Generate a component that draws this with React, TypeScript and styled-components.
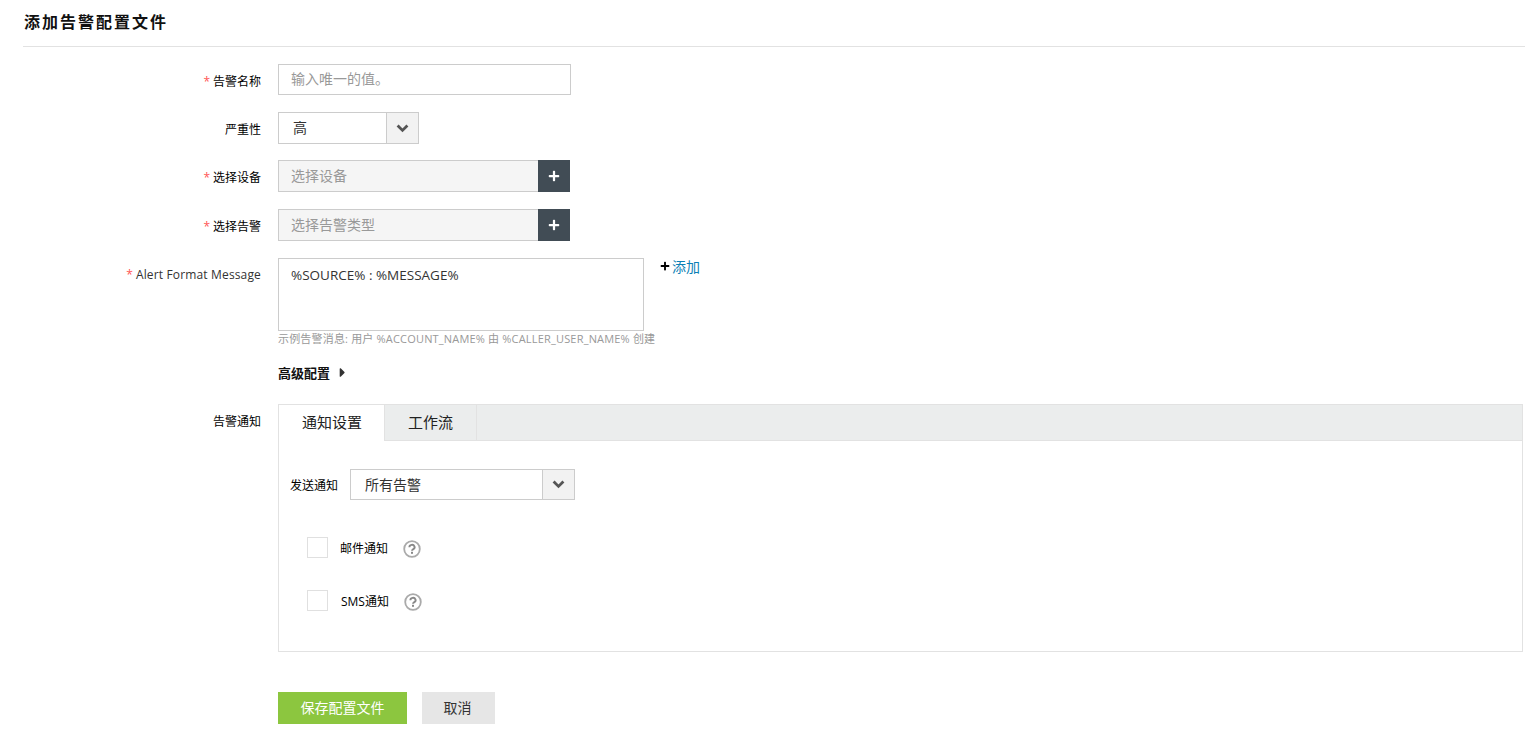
import styled, { createGlobalStyle } from 'styled-components'
import { FaPlus, FaCaretRight } from 'react-icons/fa'

const GlobalStyle = createGlobalStyle`
  html, body {
    margin: 0;
    padding: 0;
    background: #fff;
    font-family: "Open Sans", "Noto Sans CJK SC", sans-serif;
    color: #000;
  }
`

const Page = styled.div`
  width: 1525px;
  height: 742px;
  overflow: hidden;
  box-sizing: border-box;
`

const Title = styled.h1`
  margin: 0 0 0 23px;
  box-sizing: border-box;
  padding: 9px 0 0 1px;
  border-bottom: 1px solid #e2e2e2;
  height: 47px;
  font-size: 16px;
  letter-spacing: 2px;
  line-height: 24px;
  font-weight: 700;
  color: #111;
  font-family: "Noto Sans CJK SC", sans-serif;
`

const Form = styled.div`
  display: flex;
  flex-direction: column;
  padding: 17px 2px 0 23px;
`

const Row = styled.div<{ $gap: number }>`
  display: grid;
  grid-template-columns: 238px 1fr;
  column-gap: 17px;
  margin-bottom: ${(p) => p.$gap}px;
  align-items: start;
`

const Label = styled.label<{ $top?: number }>`
  text-align: right;
  font-size: 12px;
  line-height: 18px;
  padding-top: ${(p) => p.$top ?? 9}px;
  color: #000;
`

const Star = styled.span`
  color: #f55;
  margin-right: 3px;
`

const EnLabel = styled.span`
  color: #333;
  letter-spacing: 0.15px;
`

const TextInput = styled.div`
  width: 293px;
  height: 31px;
  box-sizing: border-box;
  border: 1px solid #ccc;
  padding: 0 12px;
  font-size: 14px;
  line-height: 27px;
  color: #999;
`

const SelectBox = styled.div<{ $width: number; $height: number }>`
  display: flex;
  width: ${(p) => p.$width}px;
  height: ${(p) => p.$height}px;
  box-sizing: border-box;
  border: 1px solid #ccc;
`

const SelectValue = styled.div`
  flex: 1;
  padding-left: 14px;
  font-size: 14px;
  line-height: 30px;
  color: #333;
`

const SelectArrow = styled.div`
  width: 31px;
  display: flex;
  align-items: center;
  justify-content: center;
  background: #f2f2f2;
  border-left: 1px solid #ccc;
`

const Picker = styled.div`
  display: flex;
  width: 292px;
  height: 32px;
`

const PickerField = styled.div`
  flex: 1;
  box-sizing: border-box;
  background: #f5f5f5;
  border: 1px solid #ccc;
  border-right: none;
  padding-left: 12px;
  font-size: 14px;
  line-height: 29px;
  color: #999;
`

const PickerButton = styled.div`
  width: 32px;
  display: flex;
  align-items: center;
  justify-content: center;
  background: #414c55;
  color: #fff;
  font-size: 12px;
`

const MessageWrap = styled.div`
  display: flex;
  align-items: flex-start;
`

const MessageBox = styled.div`
  width: 366px;
  height: 73px;
  box-sizing: border-box;
  border: 1px solid #ccc;
  padding: 7px 12px;
  font-size: 13.5px;
  line-height: 18px;
  color: #333;
`

const AddLink = styled.div`
  display: flex;
  align-items: center;
  margin-left: 16px;
  height: 16px;
  font-size: 14px;
  color: #0b7fb5;
`

const AddIcon = styled.span`
  display: flex;
  color: #000;
  font-size: 10px;
  margin-right: 2px;
`

const Hint = styled.div`
  font-size: 11px;
  line-height: 16px;
  letter-spacing: 0.18px;
  color: #999;
`

const Advanced = styled.div`
  display: flex;
  align-items: center;
  margin-top: 15px;
  height: 20px;
  font-size: 13px;
  font-weight: 700;
  color: #111;
`

const Caret = styled.span`
  display: flex;
  margin-left: 5px;
  font-size: 15px;
  color: #333;
`

const TabPanel = styled.div`
  height: 248px;
  box-sizing: border-box;
  border: 1px solid #e2e2e2;
`

const TabBar = styled.div`
  display: flex;
  height: 35px;
  background: #ebeded;
  border-bottom: 1px solid #e2e2e2;
`

const Tab = styled.div<{ $active?: boolean }>`
  width: ${(p) => (p.$active ? 106 : 92)}px;
  height: ${(p) => (p.$active ? 36 : 35)}px;
  box-sizing: border-box;
  padding-left: ${(p) => (p.$active ? 1 : 0)}px;
  text-align: center;
  font-size: 15px;
  line-height: 35px;
  color: #222;
  background: ${(p) => (p.$active ? '#fff' : 'transparent')};
  border-right: 1px solid #e2e2e2;
`

const TabBody = styled.div`
  padding: 28px 0 0 11px;
`

const NotifyRow = styled.div`
  display: flex;
  align-items: center;
  margin-bottom: 37px;
`

const NotifyLabel = styled.span`
  width: 60px;
  font-size: 12px;
  line-height: 18px;
  padding-top: 2px;
  color: #000;
`

const CheckRow = styled.div<{ $gap: number }>`
  display: flex;
  align-items: center;
  height: 21px;
  padding-left: 17px;
  margin-bottom: ${(p) => p.$gap}px;
`

const CheckBox = styled.span`
  width: 21px;
  height: 21px;
  box-sizing: border-box;
  border: 1px solid #e0e0e0;
  margin-right: 12px;
`

const CheckLabel = styled.span<{ $indent?: number }>`
  font-size: 12px;
  line-height: 18px;
  padding-top: 2px;
  margin-left: ${(p) => p.$indent ?? 0}px;
  color: #000;
`

const HelpIcon = styled.svg`
  margin: 2px 0 0 15px;
  flex: none;
`

const Actions = styled.div`
  display: flex;
  gap: 15px;
  margin: 40px 0 0 255px;
`

const SaveButton = styled.button`
  width: 129px;
  height: 32px;
  border: none;
  padding: 0 0 3px;
  background: #8cc63f;
  color: #fff;
  font-family: inherit;
  font-size: 14px;
`

const CancelButton = styled.button`
  width: 73px;
  height: 32px;
  border: none;
  padding: 0 2px 3px 0;
  background: #e6e6e6;
  color: #333;
  font-family: inherit;
  font-size: 14px;
`

function Help() {
  return (
    <HelpIcon width="18" height="18" viewBox="0 0 18 18">
      <circle cx="9" cy="9" r="7.8" fill="none" stroke="#aaa" strokeWidth="1.8" />
      <path d="M6.4 7.2a2.6 2.3 0 1 1 3.9 1.9c-.9.5-1.3.9-1.3 1.7" fill="none" stroke="#888" strokeWidth="1.9" />
      <rect x="8" y="11.8" width="2" height="2" fill="#888" />
    </HelpIcon>
  )
}

function Chevron() {
  return (
    <svg width="13" height="9" viewBox="0 0 13 9">
      <path d="M1.6 1.6 6.5 6.4 11.4 1.6" fill="none" stroke="#555" strokeWidth="2.8" />
    </svg>
  )
}

export default function App() {
  return (
    <Page>
      <GlobalStyle />
      <Title>添加告警配置文件</Title>
      <Form>
        <Row $gap={17}>
          <Label><Star>*</Star>告警名称</Label>
          <TextInput>输入唯一的值。</TextInput>
        </Row>
        <Row $gap={16}>
          <Label>严重性</Label>
          <SelectBox $width={141} $height={32}>
            <SelectValue>高</SelectValue>
            <SelectArrow><Chevron /></SelectArrow>
          </SelectBox>
        </Row>
        <Row $gap={17}>
          <Label><Star>*</Star>选择设备</Label>
          <Picker>
            <PickerField>选择设备</PickerField>
            <PickerButton><FaPlus /></PickerButton>
          </Picker>
        </Row>
        <Row $gap={17}>
          <Label><Star>*</Star>选择告警</Label>
          <Picker>
            <PickerField>选择告警类型</PickerField>
            <PickerButton><FaPlus /></PickerButton>
          </Picker>
        </Row>
        <Row $gap={22}>
          <Label $top={8}><Star>*</Star><EnLabel>Alert Format Message</EnLabel></Label>
          <div>
            <MessageWrap>
              <MessageBox>%SOURCE% : %MESSAGE%</MessageBox>
              <AddLink><AddIcon><FaPlus /></AddIcon>添加</AddLink>
            </MessageWrap>
            <Hint>示例告警消息: 用户 %ACCOUNT_NAME% 由 %CALLER_USER_NAME% 创建</Hint>
            <Advanced>高级配置<Caret><FaCaretRight /></Caret></Advanced>
          </div>
        </Row>
        <Row $gap={0}>
          <Label><span>告警通知</span></Label>
          <TabPanel>
            <TabBar>
              <Tab $active>通知设置</Tab>
              <Tab>工作流</Tab>
            </TabBar>
            <TabBody>
              <NotifyRow>
                <NotifyLabel>发送通知</NotifyLabel>
                <SelectBox $width={225} $height={31}>
                  <SelectValue>所有告警</SelectValue>
                  <SelectArrow><Chevron /></SelectArrow>
                </SelectBox>
              </NotifyRow>
              <CheckRow $gap={32}>
                <CheckBox />
                <CheckLabel>邮件通知</CheckLabel>
                <Help />
              </CheckRow>
              <CheckRow $gap={0}>
                <CheckBox />
                <CheckLabel $indent={1}>SMS通知</CheckLabel>
                <Help />
              </CheckRow>
            </TabBody>
          </TabPanel>
        </Row>
        <Actions>
          <SaveButton>保存配置文件</SaveButton>
          <CancelButton>取消</CancelButton>
        </Actions>
      </Form>
    </Page>
  )
}
